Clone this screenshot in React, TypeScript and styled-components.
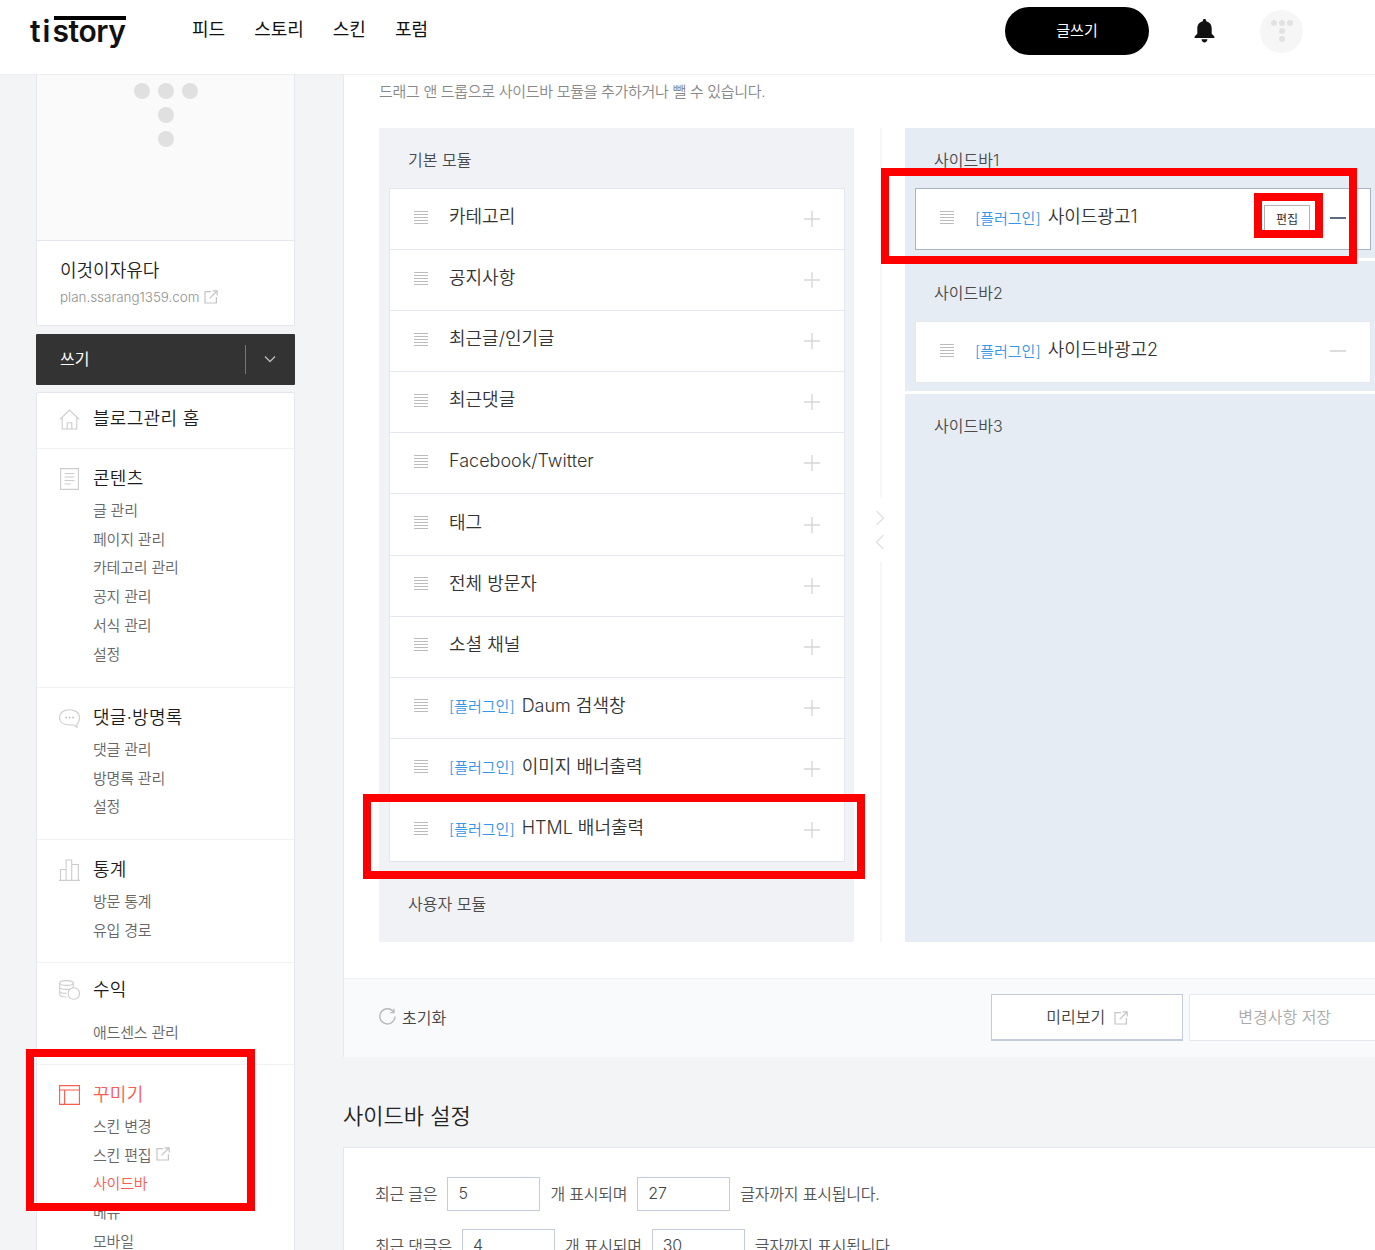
import styled, { createGlobalStyle } from 'styled-components';

const GlobalStyle = createGlobalStyle`
  html, body {
    margin: 0;
    padding: 0;
    width: 1375px;
    height: 1250px;
    overflow: hidden;
    background-color: #f3f4f6;
    font-family: 'Inter', 'Noto Sans CJK KR', 'Noto Sans', sans-serif;
    font-weight: 350;
    color: #333;
  }
  * {
    box-sizing: border-box;
  }
  p, ul, h1, h2, h3 {
    margin: 0;
    padding: 0;
    font-weight: inherit;
    list-style: none;
  }
`;

const Page = styled.div`
  position: relative;
  width: 1375px;
  height: 1250px;
  overflow: hidden;
`;

const Header = styled.header`
  height: 75px;
  background-color: #fff;
  border-bottom: 1px solid #eee;
  display: flex;
  align-items: flex-start;
  padding-left: 30px;
`;

const Logo = styled.div`
  position: relative;
  margin-top: 12px;
  width: 97px;
  font-size: 30px;
  font-weight: 600;
  line-height: 38px;
  color: #111;
  letter-spacing: 2px;
  white-space: nowrap;
  span {
    letter-spacing: -0.4px;
  }
  &::before {
    content: '';
    position: absolute;
    left: 24px;
    top: 4px;
    width: 72px;
    height: 4px;
    background-color: #000;
  }
`;

const TopNav = styled.nav`
  display: flex;
  column-gap: 29px;
  margin-left: 65px;
  margin-top: 17px;
  font-size: 18px;
  font-weight: 400;
  line-height: 26px;
  color: #111;
`;

const HeaderRight = styled.div`
  margin-left: auto;
  display: flex;
  align-items: center;
  margin-top: 7px;
  margin-right: 72px;
`;

const WriteButton = styled.div`
  width: 144px;
  height: 48px;
  border-radius: 24px;
  background-color: #000;
  color: #fff;
  font-size: 15px;
  font-weight: 400;
  display: flex;
  align-items: center;
  justify-content: center;
  padding-bottom: 3px;
  margin-right: 45px;
`;

const Avatar = styled.div`
  width: 43px;
  height: 43px;
  border-radius: 50%;
  background-color: #f6f6f6;
  margin-left: 45px;
  display: flex;
  align-items: center;
  justify-content: center;
`;

const Body = styled.div`
  display: flex;
  padding-left: 36px;
`;

const Side = styled.aside`
  width: 259px;
  flex: none;
  margin-right: 48px;
`;

const ProfileCard = styled.div`
  background-color: #fff;
  border: 1px solid #e4e7ef;
  border-top: 0;
  border-radius: 0 0 2px 2px;
`;

const ProfileImage = styled.div`
  height: 166px;
  background-color: #fafafa;
  border-bottom: 1px solid #e4e7ef;
  display: flex;
  justify-content: center;
  padding-top: 8px;
`;

const ProfileInfo = styled.div`
  height: 84px;
  padding: 17px 0 0 23px;
`;

const BlogName = styled.p`
  font-size: 18px;
  line-height: 26px;
  color: #222;
`;

const BlogUrl = styled.p`
  display: flex;
  align-items: center;
  margin-top: 3px;
  font-size: 13.4px;
  line-height: 20px;
  color: #909090;
  svg {
    margin-left: 5px;
  }
`;

const WriteBar = styled.div`
  height: 51px;
  margin-top: 8px;
  background-color: #333;
  border-radius: 1px;
  display: flex;
  align-items: center;
  color: #fff;
  font-size: 16px;
  font-weight: 400;
  padding-left: 24px;
  padding-bottom: 3px;
  div {
    margin-left: auto;
    margin-top: 2px;
    width: 50px;
    height: 29px;
    border-left: 1px solid #777;
    display: flex;
    align-items: center;
    justify-content: center;
    padding-right: 2px;
  }
`;

const NavCard = styled.div`
  margin-top: 7px;
  background-color: #fff;
  border: 1px solid #e4e7ef;
  border-radius: 2px 2px 0 0;
`;

const NavSection = styled.section<{ $height: number; $top?: number }>`
  height: ${(p) => p.$height}px;
  border-bottom: 1px solid #f1f2f6;
  padding-top: ${(p) => p.$top ?? 15}px;
  &:last-child {
    border-bottom: 0;
  }
`;

const NavTitle = styled.h3<{ $active?: boolean; $gap?: number }>`
  display: flex;
  align-items: center;
  height: 26px;
  padding: 4px 0 0 22px;
  font-size: 18px;
  letter-spacing: 0.3px;
  line-height: 22px;
  color: ${(p) => (p.$active ? '#fb5a4f' : '#1c1c1c')};
  margin-bottom: ${(p) => p.$gap ?? 5}px;
`;

const NavIcon = styled.span`
  width: 21px;
  height: 22px;
  margin-right: 13px;
  display: flex;
  align-items: center;
  justify-content: center;
  flex: none;
`;

const NavItem = styled.li<{ $active?: boolean }>`
  height: 28.8px;
  padding-left: 56px;
  display: flex;
  align-items: center;
  font-size: 15px;
  letter-spacing: -0.2px;
  color: ${(p) => (p.$active ? '#fb5a4f' : '#666')};
  svg {
    margin-left: 5px;
  }
`;

const Panel = styled.main`
  width: 1100px;
  flex: none;
  background-color: #fff;
  border: 1px solid #e6e8ef;
  border-top: 0;
  height: 982px;
`;

const Hint = styled.p`
  height: 53px;
  padding: 6px 0 0 35px;
  font-size: 15px;
  letter-spacing: -0.3px;
  line-height: 22px;
  color: #888;
`;

const Columns = styled.div`
  display: flex;
  padding-left: 35px;
  height: 814px;
`;

const ModuleColumn = styled.div`
  width: 475px;
  background-color: #f1f2f6;
  padding: 0 9px 0 10px;
`;

const ColumnTitle = styled.p<{ $top?: number }>`
  font-size: 16px;
  line-height: 22px;
  color: #4a4a4a;
  padding: ${(p) => p.$top ?? 21}px 0 0 19px;
  height: 60px;
`;

const ModuleList = styled.ul`
  border: 1px solid #e4e7ef;
  border-bottom-color: #dfe2ea;
  background-color: #fff;
`;

const ModuleRow = styled.li<{ $last?: boolean }>`
  height: 61.1px;
  display: flex;
  align-items: center;
  padding: 0 24px 0 24px;
  border-bottom: ${(p) => (p.$last ? '0' : '1px solid #e4e7ef')};
  font-size: 18px;
  line-height: 26px;
  color: #333;
`;

const RowLabel = styled.span`
  margin-top: -4px;
  display: flex;
  align-items: center;
  white-space: nowrap;
`;

const PluginTag = styled.em`
  font-style: normal;
  font-size: 15px;
  color: #3396e8;
  margin-right: 7px;
  margin-top: 3px;
`;

const Handle = styled.span`
  width: 14px;
  height: 13px;
  margin-right: 21px;
  margin-top: -4px;
  flex: none;
  background: repeating-linear-gradient(to bottom, #bbb 0, #bbb 1px, transparent 1px, transparent 3px);
`;

const RowAction = styled.span`
  margin-left: auto;
  display: flex;
  align-items: center;
`;

const Separator = styled.div`
  width: 51px;
  flex: none;
  position: relative;
  display: flex;
  flex-direction: column;
  align-items: center;
  justify-content: center;
  padding-bottom: 10px;
  &::before {
    content: '';
    position: absolute;
    left: 26px;
    top: 0;
    bottom: 0;
    width: 2px;
    background-color: #f6f7f9;
  }
`;

const ArrowBox = styled.div`
  position: relative;
  background-color: #fff;
  padding: 12px 0;
  display: flex;
  flex-direction: column;
  row-gap: 8px;
  svg {
    display: block;
  }
`;

const SidebarColumn = styled.div`
  width: 520px;
  flex: none;
  display: flex;
  flex-direction: column;
  row-gap: 3px;
`;

const SidebarGroup = styled.div<{ $height?: number }>`
  background-color: #e6ecf3;
  padding: 0 0 0 10px;
  height: ${(p) => (p.$height ? `${p.$height}px` : 'auto')};
  flex: ${(p) => (p.$height ? 'none' : '1')};
`;

const SidebarCard = styled.div<{ $selected?: boolean }>`
  width: 456px;
  height: 62px;
  background-color: #fff;
  border: 1px solid ${(p) => (p.$selected ? '#a9b3c4' : '#e4e7ef')};
  display: flex;
  align-items: center;
  padding: 0 24px 0 24px;
  font-size: 18px;
  color: #333;
  ${RowLabel} {
    margin-right: auto;
    margin-top: -8px;
  }
  ${PluginTag} {
    margin-top: 5px;
  }
`;

const EditButton = styled.span`
  width: 46px;
  height: 26px;
  border: 1px solid #b3b3b3;
  margin-right: 20px;
  margin-top: -2px;
  font-size: 12px;
  font-weight: 400;
  display: flex;
  align-items: center;
  justify-content: center;
  color: #333;
`;

const SidebarAction = styled.span`
  display: flex;
  align-items: center;
  margin-top: -2px;
`;

const PanelFooter = styled.div`
  margin-top: 36px;
  height: 79px;
  background-color: #f9fafc;
  border-top: 1px solid #eef0f4;
  display: flex;
  align-items: flex-start;
  padding: 15px 0 0 35px;
`;

const ResetLink = styled.span`
  display: flex;
  align-items: center;
  height: 45px;
  font-size: 16px;
  color: #444;
  svg {
    margin-right: 6px;
  }
`;

const FooterButton = styled.span<{ $primary?: boolean }>`
  width: ${(p) => (p.$primary ? '192px' : '191px')};
  height: 47px;
  background-color: #fff;
  border: 1px solid ${(p) => (p.$primary ? '#c3ccd8' : '#e6e8ef')};
  border-bottom-width: ${(p) => (p.$primary ? '2px' : '1px')};
  margin-left: ${(p) => (p.$primary ? '545px' : '6px')};
  display: flex;
  align-items: center;
  justify-content: center;
  padding-bottom: 3px;
  font-size: 16px;
  color: ${(p) => (p.$primary ? '#444' : '#aaa')};
  svg {
    margin-left: 9px;
    margin-top: 4px;
  }
`;

const Floating = styled.div`
  position: absolute;
  left: 343px;
  top: 1057px;
  width: 1100px;
`;

const SettingsTitle = styled.h2`
  font-size: 22px;
  line-height: 32px;
  color: #222;
  padding: 43px 0 15px 0;
`;

const SettingsCard = styled.div`
  background-color: #fff;
  border: 1px solid #e4e7ef;
  border-bottom: 0;
  height: 200px;
  padding: 29px 0 0 31px;
`;

const FormRow = styled.div`
  display: flex;
  align-items: center;
  height: 34px;
  padding-bottom: 3px;
  margin-bottom: 18px;
  font-size: 16px;
  letter-spacing: -0.2px;
  color: #555;
`;

const NumberInput = styled.span`
  width: 93px;
  height: 34px;
  align-self: flex-start;
  margin: 0 10px;
  border: 1px solid #c3ccd8;
  background-color: #fff;
  padding: 0 0 2px 10px;
  display: flex;
  align-items: center;
  font-size: 16px;
  color: #444;
`;

const Highlight = styled.div<{ $x: number; $y: number; $w: number; $h: number }>`
  position: absolute;
  left: ${(p) => p.$x}px;
  top: ${(p) => p.$y}px;
  width: ${(p) => p.$w}px;
  height: ${(p) => p.$h}px;
  border: 8px solid #f00;
  pointer-events: none;
`;

const Dots = ({ size, gap, color }: { size: number; gap: number; color: string }) => {
  const step = size + gap;
  const cells = [
    [0, 0],
    [1, 0],
    [2, 0],
    [1, 1],
    [1, 2],
  ];
  return (
    <svg width={step * 3 - gap} height={step * 3 - gap}>
      {cells.map(([cx, cy]) => (
        <circle
          key={`${cx}-${cy}`}
          cx={cx * step + size / 2}
          cy={cy * step + size / 2}
          r={size / 2}
          fill={color}
        />
      ))}
    </svg>
  );
};

const ExternalIcon = ({ color = '#c4c4c4' }: { color?: string }) => (
  <svg width="14" height="14" viewBox="0 0 14 14" fill="none" stroke={color} strokeWidth="1.2">
    <path d="M7 1.600H1v11.400h11.400V7" />
    <path d="M5.600 8.400 13 1M8.600 .8H13.200V5.400" />
  </svg>
);

const Plus = () => (
  <svg width="16" height="16" viewBox="0 0 16 16" stroke="#d8d8d8" strokeWidth="1.4">
    <path d="M8 0v16M0 8h16" />
  </svg>
);

const Minus = ({ color, width }: { color: string; width: number }) => (
  <svg width="16" height="16" viewBox="0 0 16 16" stroke={color} strokeWidth={width}>
    <path d="M0 8h16" />
  </svg>
);

const icons = {
  home: (
    <svg width="21" height="21" viewBox="0 0 21 21" fill="none" stroke="#ccc" strokeWidth="1.1">
      <path d="M.8 10.400 10.500 1l9.700 9.400M3.200 8.600V20h14.600V8.600M8.200 20v-6.200h4.600V20" />
    </svg>
  ),
  doc: (
    <svg width="19" height="22" viewBox="0 0 19 22" fill="none" stroke="#ccc" strokeWidth="1.1">
      <path d="M.6.6h17.800v20.800H.6zM4.600 5.500h10M4.600 9h10M4.600 12.500h10M4.600 16h6" />
    </svg>
  ),
  comment: (
    <svg width="21" height="19" viewBox="0 0 21 19" fill="none" stroke="#ccc" strokeWidth="1.1">
      <path d="M10.500 .8C5 .8.6 3.500.6 8.500s4.400 7.500 9.900 7.500h4.500l3 2.300v-3.400c1.800-1.300 2.400-3.500 2.400-6.400 0-5-4.400-7.700-9.900-7.700Z" />
      <path d="M6.500 8.500h1.300M9.900 8.500h1.300M13.300 8.500h1.300" stroke="#aaa" strokeWidth="1.6" />
    </svg>
  ),
  chart: (
    <svg width="21" height="22" viewBox="0 0 21 22" fill="none" stroke="#ccc" strokeWidth="1.1">
      <path d="M0 21.400h21M1.500 21V10.500h5.600V21M7.100 21V1h5.600v20M12.700 21V5.500h6.600V21" />
    </svg>
  ),
  coins: (
    <svg width="21" height="20" viewBox="0 0 21 20" fill="none" stroke="#ccc" strokeWidth="1.1">
      <ellipse cx="7.500" cy="3" rx="6.800" ry="2.400" />
      <path d="M.7 3v11.500c0 1.400 3 2.500 6.800 2.500M.7 7c0 1.400 3 2.400 6.800 2.400s6.800-1 6.800-2.400V3M.7 11c0 1.400 3 2.400 6.800 2.400" />
      <circle cx="14.800" cy="13.500" r="5.700" fill="#fff" />
    </svg>
  ),
  layout: (
    <svg width="21" height="20" viewBox="0 0 21 20" fill="none" stroke="#fb5a4f" strokeWidth="1.1">
      <path d="M.6.6h19.800v18.800H.6zM.6 5h19.800M5.600 5v14.400" />
    </svg>
  ),
};

const navSections = [
  { title: '블로그관리 홈', icon: icons.home, height: 56, top: 11, items: [] as string[] },
  {
    title: '콘텐츠',
    icon: icons.doc,
    height: 239,
    items: ['글 관리', '페이지 관리', '카테고리 관리', '공지 관리', '서식 관리', '설정'],
  },
  { title: '댓글·방명록', icon: icons.comment, height: 152, items: ['댓글 관리', '방명록 관리', '설정'] },
  { title: '통계', icon: icons.chart, height: 123, items: ['방문 통계', '유입 경로'] },
  { title: '수익', icon: icons.coins, height: 102, top: 12, gap: 16, items: ['애드센스 관리'] },
];

const basicModules = ['카테고리', '공지사항', '최근글/인기글', '최근댓글', 'Facebook/Twitter', '태그', '전체 방문자', '소셜 채널'];
const pluginModules = ['Daum 검색창', '이미지 배너출력', 'HTML 배너출력'];

export default function App() {
  return (
    <Page>
      <GlobalStyle />
      <Header>
        <Logo>
          ti<span>story</span>
        </Logo>
        <TopNav>
          <span>피드</span>
          <span>스토리</span>
          <span>스킨</span>
          <span>포럼</span>
        </TopNav>
        <HeaderRight>
          <WriteButton>글쓰기</WriteButton>
          <svg width="21" height="24" viewBox="0 0 21 24" fill="#111">
            <path d="M10.500 0c-1 0-1.700.7-1.700 1.700v.6C5.300 3.100 3.300 6 3.300 9.500v5.200L.6 17.600v1.500h19.800v-1.500l-2.700-2.900V9.500c0-3.500-2-6.400-5.500-7.200v-.6c0-1-.7-1.700-1.700-1.700ZM7.500 20.300c.2 1.900 1.400 3.200 3 3.200s2.800-1.300 3-3.200h-6Z" />
          </svg>
          <Avatar>
            <Dots size={6} gap={2} color="#e2e2e2" />
          </Avatar>
        </HeaderRight>
      </Header>
      <Body>
        <Side>
          <ProfileCard>
            <ProfileImage>
              <Dots size={16} gap={8} color="#e0e0e0" />
            </ProfileImage>
            <ProfileInfo>
              <BlogName>이것이자유다</BlogName>
              <BlogUrl>
                plan.ssarang1359.com
                <ExternalIcon />
              </BlogUrl>
            </ProfileInfo>
          </ProfileCard>
          <WriteBar>
            쓰기
            <div>
              <svg width="12" height="8" viewBox="0 0 12 8" fill="none" stroke="#bbb" strokeWidth="1.3">
                <path d="M1 1.500 6 6.500l5-5" />
              </svg>
            </div>
          </WriteBar>
          <NavCard>
            {navSections.map((section) => (
              <NavSection key={section.title} $height={section.height} $top={section.top}>
                <NavTitle $gap={section.gap}>
                  <NavIcon>{section.icon}</NavIcon>
                  {section.title}
                </NavTitle>
                <ul>
                  {section.items.map((item) => (
                    <NavItem key={item}>{item}</NavItem>
                  ))}
                </ul>
              </NavSection>
            ))}
            <NavSection $height={200}>
              <NavTitle $active>
                <NavIcon>{icons.layout}</NavIcon>
                꾸미기
              </NavTitle>
              <ul>
                <NavItem>스킨 변경</NavItem>
                <NavItem>
                  스킨 편집
                  <ExternalIcon />
                </NavItem>
                <NavItem $active>사이드바</NavItem>
                <NavItem>메뉴</NavItem>
                <NavItem>모바일</NavItem>
              </ul>
            </NavSection>
          </NavCard>
        </Side>
        <Panel>
          <Hint>드래그 앤 드롭으로 사이드바 모듈을 추가하거나 뺄 수 있습니다.</Hint>
          <Columns>
            <ModuleColumn>
              <ColumnTitle>기본 모듈</ColumnTitle>
              <ModuleList>
                {basicModules.map((name) => (
                  <ModuleRow key={name}>
                    <Handle />
                    <RowLabel>{name}</RowLabel>
                    <RowAction>
                      <Plus />
                    </RowAction>
                  </ModuleRow>
                ))}
                {pluginModules.map((name, i) => (
                  <ModuleRow key={name} $last={i === pluginModules.length - 1}>
                    <Handle />
                    <RowLabel>
                      <PluginTag>[플러그인]</PluginTag>
                      {name}
                    </RowLabel>
                    <RowAction>
                      <Plus />
                    </RowAction>
                  </ModuleRow>
                ))}
              </ModuleList>
              <ColumnTitle $top={31}>사용자 모듈</ColumnTitle>
            </ModuleColumn>
            <Separator>
              <ArrowBox>
                <svg width="10" height="16" viewBox="0 0 10 16" fill="none" stroke="#dde0e6" strokeWidth="1.2">
                  <path d="M1.500 1 8.500 8l-7 7" />
                </svg>
                <svg width="10" height="16" viewBox="0 0 10 16" fill="none" stroke="#dde0e6" strokeWidth="1.2">
                  <path d="M8.500 1 1.500 8l7 7" />
                </svg>
              </ArrowBox>
            </Separator>
            <SidebarColumn>
              <SidebarGroup $height={130}>
                <ColumnTitle>사이드바1</ColumnTitle>
                <SidebarCard $selected>
                  <Handle />
                  <RowLabel>
                    <PluginTag>[플러그인]</PluginTag>
                    사이드광고1
                  </RowLabel>
                  <EditButton>편집</EditButton>
                  <SidebarAction>
                    <Minus color="#5c6b80" width={2} />
                  </SidebarAction>
                </SidebarCard>
              </SidebarGroup>
              <SidebarGroup $height={130}>
                <ColumnTitle>사이드바2</ColumnTitle>
                <SidebarCard>
                  <Handle />
                  <RowLabel>
                    <PluginTag>[플러그인]</PluginTag>
                    사이드바광고2
                  </RowLabel>
                  <SidebarAction>
                    <Minus color="#bbb" width={1} />
                  </SidebarAction>
                </SidebarCard>
              </SidebarGroup>
              <SidebarGroup>
                <ColumnTitle>사이드바3</ColumnTitle>
              </SidebarGroup>
            </SidebarColumn>
          </Columns>
          <PanelFooter>
            <ResetLink>
              <svg width="17" height="17" viewBox="0 0 17 17" fill="none" stroke="#bbb" strokeWidth="1.4">
                <path d="M14.800 4.200A7.600 7.600 0 1 0 16 8.500" />
                <path d="M15 .8v3.800h-3.800" />
              </svg>
              초기화
            </ResetLink>
            <FooterButton $primary>
              미리보기
              <ExternalIcon />
            </FooterButton>
            <FooterButton>변경사항 저장</FooterButton>
          </PanelFooter>
        </Panel>
      </Body>
      <Floating>
        <SettingsTitle>사이드바 설정</SettingsTitle>
        <SettingsCard>
          <FormRow>
            최근 글은
            <NumberInput>5</NumberInput>
            개 표시되며
            <NumberInput>27</NumberInput>
            글자까지 표시됩니다.
          </FormRow>
          <FormRow>
            최근 댓글은
            <NumberInput>4</NumberInput>
            개 표시되며
            <NumberInput>30</NumberInput>
            글자까지 표시됩니다.
          </FormRow>
        </SettingsCard>
      </Floating>
      <Highlight $x={881} $y={168} $w={476} $h={96} />
      <Highlight $x={1254} $y={193} $w={69} $h={45} />
      <Highlight $x={363} $y={794} $w={502} $h={85} />
      <Highlight $x={26} $y={1049} $w={229} $h={162} />
    </Page>
  );
}
